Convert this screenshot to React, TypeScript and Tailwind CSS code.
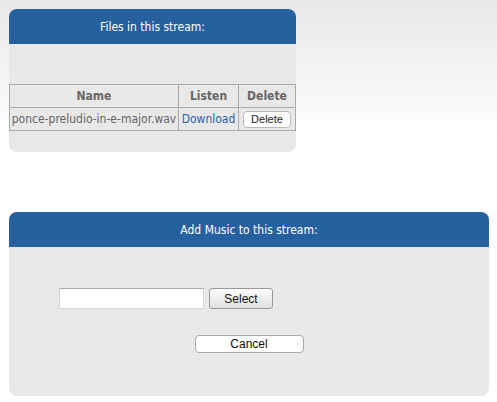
import React from 'react';

const App: React.FC = () => {
    return (
        <div
            className="min-h-[402px] w-[497px] bg-[linear-gradient(to_bottom,#e8e8e8_0px,#ffffff_138px,#ffffff_100%)] pl-[9px] pt-[9px]"
            style={{ fontFamily: '"DejaVu Sans Condensed", "DejaVu Sans", sans-serif' }}
        >
            {/* Files panel */}
            <div className="w-[287px] rounded-[8px] bg-[#e8e8e8] overflow-hidden">
                <div className="h-[35px] bg-[#26609e] flex items-center justify-center text-white text-[12px]">
                    Files in this stream:
                </div>
                <div className="pt-[40px] pb-[21px]">
                    <table className="w-[287px] table-fixed border-collapse border border-[#aaa] text-[12px] text-[#666]">
                        <colgroup>
                            <col className="w-[169px]" />
                            <col className="w-[60px]" />
                            <col />
                        </colgroup>
                        <thead>
                            <tr>
                                <th className="h-[23px] border border-[#aaa] font-bold">Name</th>
                                <th className="h-[23px] border border-[#aaa] font-bold">Listen</th>
                                <th className="h-[23px] border border-[#aaa] font-bold">Delete</th>
                            </tr>
                        </thead>
                        <tbody>
                            <tr>
                                <td className="h-[23px] border border-[#aaa] text-center whitespace-nowrap">
                                    ponce-preludio-in-e-major.wav
                                </td>
                                <td className="h-[23px] border border-[#aaa] text-center">
                                    <a href="#" className="text-[#2a64a8]">Download</a>
                                </td>
                                <td className="h-[23px] border border-[#aaa] text-center">
                                    <button
                                        className="w-[48px] h-[17px] bg-white border border-[#bbb] rounded-[4px] text-[11px] text-[#222] leading-none align-middle"
                                        style={{ fontFamily: '"Liberation Sans", Arial, sans-serif' }}
                                    >
                                        Delete
                                    </button>
                                </td>
                            </tr>
                        </tbody>
                    </table>
                </div>
            </div>

            {/* Add music panel */}
            <div className="mt-[60px] w-[480px] h-[184px] rounded-[8px] bg-[#e8e8e8] overflow-hidden">
                <div className="h-[35px] bg-[#26609e] flex items-center justify-center text-white text-[12px]">
                    Add Music to this stream:
                </div>
                <div
                    className="flex flex-col"
                    style={{ fontFamily: '"Liberation Sans", Arial, sans-serif' }}
                >
                    <div className="flex items-center gap-[5px] pl-[50px] pt-[41px]">
                        <input
                            type="text"
                            className="w-[145px] h-[21px] bg-white border border-[#d6d6d6] border-t-[#a8a8a8] outline-none"
                        />
                        <button className="w-[64px] h-[21px] rounded-[3px] border border-[#9a9a9a] bg-[linear-gradient(to_bottom,#fafafa,#e2e2e2)] text-[12px] text-[#111]">
                            Select
                        </button>
                    </div>
                    <div className="flex justify-center pt-[26px]">
                        <button className="w-[109px] h-[18px] rounded-[4px] border border-[#a8a8a8] bg-white text-[12px] text-[#111] leading-none">
                            Cancel
                        </button>
                    </div>
                </div>
            </div>
        </div>
    );
};

export default App;
